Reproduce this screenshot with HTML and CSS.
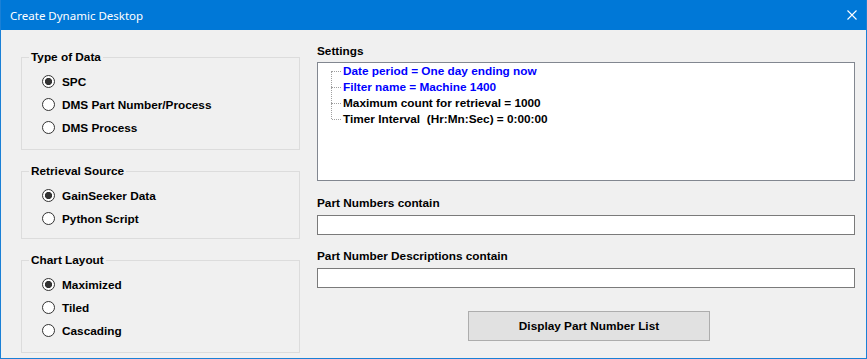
FILE: index.html
```html
<!DOCTYPE html>
<html lang="en">
<head>
  <meta charset="UTF-8" />
  <meta name="viewport" content="width=device-width, initial-scale=1.0"/>
  <title>Create Dynamic Desktop</title>
  <link rel="stylesheet" href="styles.css">
</head>
<body>
  <div class="window">
    <div class="title-bar">
      <span class="title">Create Dynamic Desktop</span>
      <button class="close-button" title="Close">
        <svg width="10" height="10" viewBox="0 0 10 10">
          <path d="M0.5 0.5 L9.5 9.5 M9.5 0.5 L0.5 9.5" stroke="#fff" stroke-width="1.1" fill="none"/>
        </svg>
      </button>
    </div>

    <div class="content">
      <div class="left-column">
        <fieldset class="group group-tall">
          <legend>Type of Data</legend>
          <div class="options">
            <label><input type="radio" name="datatype" checked> SPC</label>
            <label><input type="radio" name="datatype"> DMS Part Number/Process</label>
            <label><input type="radio" name="datatype"> DMS Process</label>
          </div>
        </fieldset>

        <fieldset class="group">
          <legend>Retrieval Source</legend>
          <div class="options">
            <label><input type="radio" name="source" checked> GainSeeker Data</label>
            <label><input type="radio" name="source"> Python Script</label>
          </div>
        </fieldset>

        <fieldset class="group group-tall">
          <legend>Chart Layout</legend>
          <div class="options">
            <label><input type="radio" name="layout" checked> Maximized</label>
            <label><input type="radio" name="layout"> Tiled</label>
            <label><input type="radio" name="layout"> Cascading</label>
          </div>
        </fieldset>
      </div>

      <div class="right-column">
        <div class="field-label">Settings</div>
        <ul class="settings-tree">
          <li class="changed">Date period = One day ending now</li>
          <li class="changed">Filter name = Machine 1400</li>
          <li>Maximum count for retrieval = 1000</li>
          <li>Timer Interval  (Hr:Mn:Sec) = 0:00:00</li>
        </ul>

        <label class="field-label label-gap" for="partNumbers">Part Numbers contain</label>
        <input type="text" id="partNumbers" class="text-input" />

        <label class="field-label label-gap-small" for="partDescriptions">Part Number Descriptions contain</label>
        <input type="text" id="partDescriptions" class="text-input" />

        <button class="list-button">Display Part Number List</button>
      </div>
    </div>
  </div>
</body>
</html>
```

FILE: styles.css
```css
body {
  margin: 0;
  font-family: 'Liberation Sans', Arial, sans-serif;
  font-size: 11.8px;
  font-weight: bold;
  color: #000;
  background: #f0f0f0;
}

.window {
  width: 867px;
  height: 359px;
  box-sizing: border-box;
  border: 1px solid #1a80d6;
  border-top: none;
  background: #f0f0f0;
  overflow: hidden;
}

.title-bar {
  height: 30px;
  margin: 0 -1px;
  background: #0078d7;
  display: flex;
  align-items: center;
  justify-content: space-between;
  padding: 0 10px;
}

.title {
  font-family: 'Noto Sans', sans-serif;
  font-weight: normal;
  font-size: 11.5px;
  color: #fff;
}

.close-button {
  background: none;
  border: none;
  padding: 0;
  width: 10px;
  height: 10px;
  display: flex;
}

.content {
  display: flex;
  align-items: flex-start;
  padding: 14px 0 0 20px;
  gap: 17px;
}

.left-column {
  width: 279px;
  display: flex;
  flex-direction: column;
  gap: 14px;
  padding-top: 6px;
}

.group {
  margin: 0;
  padding: 0;
  border: 1px solid #dcdcdc;
  min-width: 0;
}

.group legend {
  margin-left: 7px;
  padding: 0 2px;
  line-height: 14px;
}

.options {
  display: flex;
  flex-direction: column;
  padding: 6px 0 8px 20px;
}

.group-tall .options {
  padding-top: 6px;
  padding-bottom: 10px;
}

.options label {
  display: flex;
  align-items: center;
  gap: 7px;
  height: 23px;
}

input[type="radio"] {
  appearance: none;
  margin: 0;
  width: 13px;
  height: 13px;
  border: 1px solid #333;
  border-radius: 50%;
  background: #fff;
}

input[type="radio"]:checked {
  background: radial-gradient(circle, #333 0, #333 3.3px, #fff 3.9px);
}

.right-column {
  width: 538px;
  display: flex;
  flex-direction: column;
}

.field-label {
  display: block;
  line-height: 14px;
  margin-bottom: 4px;
}

.settings-tree {
  list-style: none;
  margin: 0;
  height: 117px;
  padding: 0 0 0 25px;
  background: #fff;
  border: 1px solid #828790;
}

.settings-tree li {
  position: relative;
  line-height: 16px;
  white-space: pre;
}

.settings-tree li::before {
  content: "";
  position: absolute;
  left: -11px;
  top: 8px;
  width: 9px;
  border-top: 1px dotted #a0a0a0;
}

.settings-tree li:not(:last-child)::after {
  content: "";
  position: absolute;
  left: -12px;
  top: 8px;
  height: 16px;
  border-left: 1px dotted #a0a0a0;
}

.settings-tree .changed {
  color: #0000ff;
}

.label-gap {
  margin-top: 15px;
  margin-bottom: 5px;
}

.label-gap-small {
  margin-top: 14px;
  margin-bottom: 5px;
}

.text-input {
  height: 20px;
  box-sizing: border-box;
  margin: 0;
  border: 1px solid #7a7a7a;
  background: #fff;
}

.list-button {
  align-self: flex-start;
  margin: 23px 0 0 151px;
  width: 242px;
  height: 30px;
  background: #e1e1e1;
  border: 1px solid #adadad;
  font-family: 'Liberation Sans', Arial, sans-serif;
  font-size: 11.8px;
  font-weight: bold;
  color: #000;
}
```
